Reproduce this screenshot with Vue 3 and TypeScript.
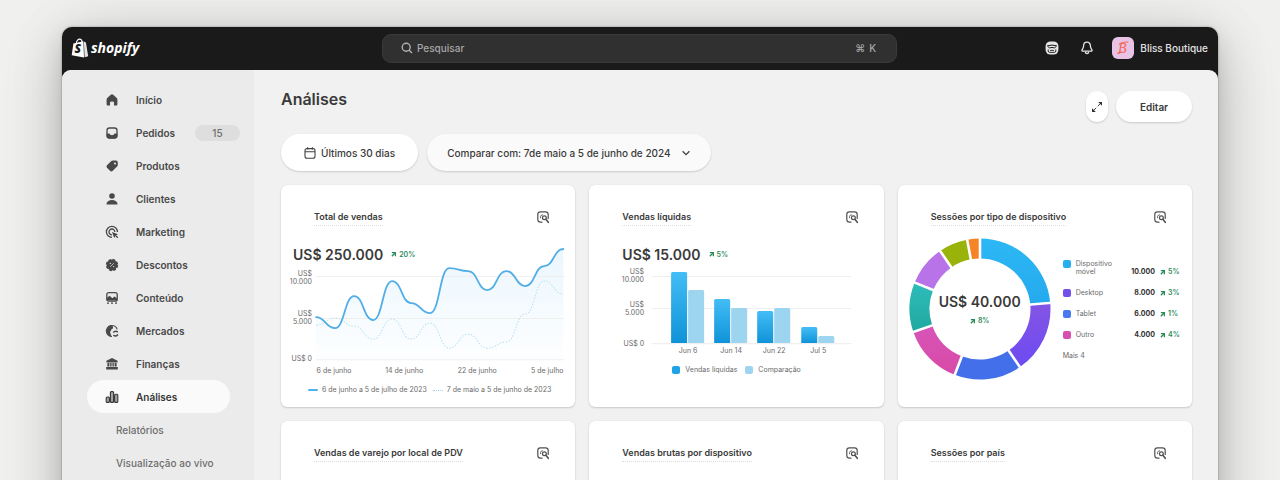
<script setup lang="ts">
interface NavItem {
  label: string
  icon: string
  badge?: string
  active?: boolean
}

interface Slice {
  name: string
  from: number
  to: number
  color: string
}

interface DeviceRow {
  label: string
  value: string
  delta: string
  color: string
}

const navItems: NavItem[] = [
  { label: 'Início', icon: 'home' },
  { label: 'Pedidos', icon: 'orders', badge: '15' },
  { label: 'Produtos', icon: 'tag' },
  { label: 'Clientes', icon: 'person' },
  { label: 'Marketing', icon: 'target' },
  { label: 'Descontos', icon: 'discount' },
  { label: 'Conteúdo', icon: 'content' },
  { label: 'Mercados', icon: 'globe' },
  { label: 'Finanças', icon: 'bank' },
  { label: 'Análises', icon: 'bars', active: true },
]

const subItems: string[] = ['Relatórios', 'Visualização ao vivo']

const CHART_LEFT = 35
const CHART_STEP = 19
const currentSales: number[] = [89, 100, 68, 92, 53, 75, 85, 40, 43, 62, 43, 58, 38, 21]
const previousSales: number[] = [97, 90, 98, 111, 91, 111, 95, 120, 106, 120, 114, 86, 53, 66]

function smoothPath(values: number[]): string {
  return values
    .map((y, i) => {
      const x = CHART_LEFT + i * CHART_STEP
      if (i === 0) return `M${x} ${y}`
      const mid = x - CHART_STEP / 2
      return `C${mid} ${values[i - 1]} ${mid} ${y} ${x} ${y}`
    })
    .join(' ')
}

const currentPath = smoothPath(currentSales)
const previousPath = smoothPath(previousSales)
const areaPath = `${currentPath} V131 H${CHART_LEFT} Z`

const barGroups = [
  { label: 'Jun 6', x: 82, sales: 44, compare: 62 },
  { label: 'Jun 14', x: 125, sales: 71, compare: 80 },
  { label: 'Jun 22', x: 168, sales: 83, compare: 80 },
  { label: 'Jul 5', x: 212, sales: 99, compare: 108 },
]
const BASELINE = 115

function barPath(x: number, top: number): string {
  return `M${x} ${BASELINE} V${top + 1.5} Q${x} ${top} ${x + 1.5} ${top} H${x + 14.5} Q${x + 16} ${top} ${x + 16} ${top + 1.5} V${BASELINE} Z`
}

const CX = 82
const CY = 81

function polar(angle: number, radius: number): { x: number; y: number } {
  const rad = ((angle - 90) * Math.PI) / 180
  return { x: CX + radius * Math.cos(rad), y: CY + radius * Math.sin(rad) }
}

function slicePath(s: Slice): string {
  const a = polar(s.from, 70.5)
  const b = polar(s.to, 70.5)
  const c = polar(s.to, 50.5)
  const d = polar(s.from, 50.5)
  return `M${a.x} ${a.y} A70.5 70.5 0 0 1 ${b.x} ${b.y} L${c.x} ${c.y} A50.5 50.5 0 0 0 ${d.x} ${d.y} Z`
}

const slices: Slice[] = [
  { name: 'a', from: 0, to: 85, color: 'url(#slice-sky)' },
  { name: 'b', from: 85, to: 145.5, color: 'url(#slice-violet)' },
  { name: 'c', from: 145.5, to: 201, color: '#4370ea' },
  { name: 'd', from: 201, to: 251, color: 'url(#slice-pink)' },
  { name: 'e', from: 251, to: 292, color: 'url(#slice-teal)' },
  { name: 'f', from: 292, to: 325.5, color: '#b873e8' },
  { name: 'g', from: 325.5, to: 349.5, color: '#9ab30a' },
  { name: 'h', from: 349.5, to: 360, color: '#f58426' },
]

const separators = slices.map((s) => ({ from: polar(s.from, 48), to: polar(s.from, 73) }))

const deviceRows: DeviceRow[] = [
  { label: 'Dispositivo móvel', value: '10.000', delta: '5%', color: 'sky' },
  { label: 'Desktop', value: '8.000', delta: '3%', color: 'violet' },
  { label: 'Tablet', value: '6.000', delta: '1%', color: 'blue' },
  { label: 'Outro', value: '4.000', delta: '4%', color: 'pink' },
]

const cards = [
  { title: 'Total de vendas', kind: 'line' },
  { title: 'Vendas líquidas', kind: 'bar' },
  { title: 'Sessões por tipo de dispositivo', kind: 'donut' },
  { title: 'Vendas de varejo por local de PDV', kind: 'empty' },
  { title: 'Vendas brutas por dispositivo', kind: 'empty' },
  { title: 'Sessões por país', kind: 'empty' },
]
</script>

<template>
  <div class="stage">
    <div class="window">
      <header class="topbar">
        <a class="brand" href="#" aria-label="shopify">
          <svg class="bag" viewBox="0 0 18 20" aria-hidden="true">
            <path d="M5.2 6 C5.4 2.6 7.4 .9 9 1.1 C10.8 1.3 11.2 3.4 11.2 5.4" fill="none" stroke="#fff" stroke-width="1.1" />
            <path d="M2.4 5.4 L12.4 3.2 L13 19.4 L.7 17.2 Z" fill="#fff" />
            <path d="M12.9 3.4 L14.9 4.6 L17.2 18.3 L13.6 19.3 Z" fill="#e4e4e4" />
            <text x="3.6" y="15.4" class="bag-letter">S</text>
          </svg>
          <span class="wordmark">shopify</span>
        </a>
        <label class="search">
          <svg class="search-icon" viewBox="0 0 12 12" aria-hidden="true">
            <circle cx="5.2" cy="5.2" r="4" /><path d="M8.2 8.2 L11 11" />
          </svg>
          <input type="search" placeholder="Pesquisar" aria-label="Pesquisar" />
          <kbd>⌘</kbd><kbd>K</kbd>
        </label>
        <div class="account">
          <button class="plain" type="button" aria-label="Assistente">
            <svg viewBox="0 0 14 14" aria-hidden="true">
              <rect x=".6" y=".4" width="12.8" height="13.2" rx="4.8" fill="#e6e6e6" />
              <path d="M2.2 4.8 Q7 3.4 11.8 4.8 M2.6 5.4 Q4.6 8 7 6.4 Q9.4 8 11.4 5.4" fill="none" stroke="#1a1a1a" stroke-width="1" />
              <path d="M3.2 8.4 V10 Q3.2 11.4 4.6 11.4 H9.4 Q10.8 11.4 10.8 10 V8.4 M5 9.8 Q7 8.4 9 9.8" fill="none" stroke="#1a1a1a" stroke-width=".9" />
            </svg>
          </button>
          <button class="plain" type="button" aria-label="Notificações">
            <svg viewBox="0 0 14 14" aria-hidden="true" fill="none" stroke="#e3e3e3" stroke-width="1.3" stroke-linejoin="round">
              <path d="M7 1.2 C4.8 1.2 3.6 2.8 3.6 4.8 C3.6 7 2.6 7.8 2 9 C1.7 9.8 2.1 10.2 2.8 10.2 H11.2 C11.9 10.2 12.3 9.8 12 9 C11.4 7.8 10.4 7 10.4 4.8 C10.4 2.8 9.2 1.2 7 1.2 Z" />
              <path d="M5.2 10.6 C5.4 12 6 12.6 7 12.6 C8 12.6 8.6 12 8.8 10.6" />
            </svg>
          </button>
          <button class="profile" type="button">
            <svg class="avatar" viewBox="0 0 22 22" aria-hidden="true">
              <rect width="22" height="22" rx="6" fill="#e9c3e6" />
              <text x="6" y="16" class="avatar-letter">B</text>
              <path d="M7 7.4 Q9 4.8 16 5 M5.4 16.4 Q8 17.2 10 14.6" fill="none" stroke="#f2654e" stroke-width="1" stroke-linecap="round" />
            </svg>
            <span>Bliss Boutique</span>
          </button>
        </div>
      </header>

      <div class="body">
        <nav class="sidebar" aria-label="Principal">
          <a v-for="item in navItems" :key="item.label" href="#" class="nav-item" :class="{ active: item.active }">
            <svg class="nav-icon" viewBox="0 0 14 14" aria-hidden="true">
              <path v-if="item.icon === 'home'" d="M7 1.2 Q7.6 1.2 8.2 1.7 L11.8 5 Q12.4 5.6 12.4 6.4 V11.2 Q12.4 12.4 11.2 12.4 H9 V9.6 Q9 8.4 7 8.4 Q5 8.4 5 9.6 V12.4 H2.8 Q1.6 12.4 1.6 11.2 V6.4 Q1.6 5.6 2.2 5 L5.8 1.7 Q6.4 1.2 7 1.2 Z" />
              <template v-else-if="item.icon === 'orders'">
                <rect x="2" y="2" width="10" height="10" rx="2.4" fill="none" stroke="currentColor" stroke-width="1.3" />
                <path d="M1.6 7.4 H4.4 Q5 9.2 7 9.2 Q9 9.2 9.6 7.4 H12.4 V10 Q12.4 12.6 9.8 12.6 H4.2 Q1.6 12.6 1.6 10 Z" />
              </template>
              <path v-else-if="item.icon === 'tag'" fill-rule="evenodd" d="M8 1.6 H11 Q12.8 1.6 12.8 3.4 V5.8 Q12.8 6.8 12.1 7.5 L7.8 11.8 Q6.4 13.2 5 11.8 L2 8.8 Q.8 7.4 2 6.2 L5.8 2.4 Q6.8 1.6 8 1.6 Z M10 3.4 A1 1 0 1 0 10 5.4 A1 1 0 1 0 10 3.4 Z" />
              <template v-else-if="item.icon === 'person'">
                <circle cx="7" cy="4" r="2.8" />
                <path d="M1.8 12.4 Q1.4 12.4 1.5 11.6 Q2.6 8 7 8 Q11.4 8 12.5 11.6 Q12.6 12.4 12.2 12.4 Z" />
              </template>
              <g v-else-if="item.icon === 'target'" fill="none" stroke="currentColor" stroke-width="1.3">
                <path d="M7 12.4 A5.5 5.5 0 1 1 12.4 7" /><path d="M7 9.8 A2.9 2.9 0 1 1 9.8 7" />
                <path d="M7 7 L13 9.2 L10.6 10.4 L9.2 13 Z" fill="currentColor" stroke="none" />
                <path d="M10.4 10.4 L12.8 12.8" />
              </g>
              <template v-else-if="item.icon === 'discount'">
                <circle cx="7" cy="7" r="5.4" />
                <circle cx="7" cy="7" r="5.4" fill="none" stroke="currentColor" stroke-width="1.6" stroke-dasharray="2.7 1.54" />
                <path d="M5.2 8.8 L8.8 5.2" stroke="#d0d0d0" stroke-width=".8" />
                <circle cx="5.4" cy="5.4" r=".7" fill="#d0d0d0" /><circle cx="8.6" cy="8.6" r=".7" fill="#d0d0d0" />
              </template>
              <template v-else-if="item.icon === 'content'">
                <rect x="1.8" y="1.6" width="10.4" height="8.6" rx="2" fill="none" stroke="currentColor" stroke-width="1.3" />
                <path d="M1.8 7 L4.6 4.8 L7.4 7.2 L9.4 5.6 L12.2 7.4 V9.4 H1.8 Z" />
                <path d="M2 12.2 H4 M6 12.2 H8 M10 12.2 H12" stroke="currentColor" stroke-width="1.2" />
              </template>
              <template v-else-if="item.icon === 'globe'">
                <path d="M12.2 5.4 A5.5 5.5 0 1 0 7 12.5" fill="none" stroke="currentColor" stroke-width="1.2" />
                <path d="M6.8 1.6 Q9 3 7.4 5 Q5.6 5 6 7 Q4.4 7 5.4 9.2 L6.6 12.4 Q1.6 11.6 1.4 7 Q1.8 2 6.8 1.6 Z" />
                <path d="M8.2 8.6 Q10.4 6.2 12.8 8.2 M13 10.4 Q10.8 13 8.4 11.2" fill="none" stroke="currentColor" stroke-width="1.5" />
              </template>
              <path v-else-if="item.icon === 'bank'" d="M7 .9 L12.6 3.8 V5.4 H1.4 V3.8 Z M2.4 6 H4.4 V9.4 H2.4 Z M5.2 6 H6.6 V9.4 H5.2 Z M7.4 6 H8.8 V9.4 H7.4 Z M9.6 6 H11.6 V9.4 H9.6 Z M1.2 10 H12.8 V12.4 H1.2 Z" />
              <g v-else fill="#a3a3a3" stroke="currentColor" stroke-width="1.1">
                <rect x="1.2" y="7" width="3.2" height="5.4" rx="1" />
                <rect x="5.4" y="1.6" width="3.2" height="10.8" rx="1" />
                <rect x="9.6" y="4.2" width="3.2" height="8.2" rx="1" />
              </g>
            </svg>
            <span class="nav-label">{{ item.label }}</span>
            <span v-if="item.badge" class="badge">{{ item.badge }}</span>
          </a>
          <a v-for="label in subItems" :key="label" href="#" class="nav-item sub">{{ label }}</a>
        </nav>

        <main class="main">
          <div class="page-head">
            <h1>Análises</h1>
            <div class="actions">
              <button class="pill expand" type="button" aria-label="Expandir">
                <svg viewBox="0 0 12 12" aria-hidden="true">
                  <path d="M2.4 9.6 L9.6 2.4" stroke="#444" stroke-width="1" stroke-dasharray="4 2.2" />
                  <path d="M7.2 1 H11 V4.8 Z M1 7.2 V11 H4.8 Z" fill="#303030" />
                </svg>
              </button>
              <button class="pill edit" type="button">Editar</button>
            </div>
          </div>

          <div class="filters">
            <button class="pill" type="button">
              <svg class="calendar" viewBox="0 0 12 12" aria-hidden="true">
                <rect x="1" y="1.6" width="10" height="9.6" rx="2" /><path d="M1 4.8 H11 M3.6 .2 V2.4 M8.4 .2 V2.4" />
              </svg>
              Últimos 30 dias
            </button>
            <button class="pill compare" type="button">
              Comparar com: 7de maio a 5 de junho de 2024
              <svg class="chevron" viewBox="0 0 10 10" aria-hidden="true"><path d="M1.6 3.2 L5 6.6 L8.4 3.2" /></svg>
            </button>
          </div>

          <div class="cards">
            <section v-for="card in cards" :key="card.title" class="card">
              <div class="card-head">
                <h2>{{ card.title }}</h2>
                <button class="explore" type="button" :aria-label="'Explorar ' + card.title">
                  <svg viewBox="0 0 12 12" aria-hidden="true" fill="none" stroke="#505050" stroke-width="1.2" stroke-linecap="round">
                    <path d="M5 11.2 H3.4 Q.8 11.2 .8 8.6 V3.2 Q.8 .8 3.4 .8 H8.6 Q11.2 .8 11.2 3.4 V7.4" />
                    <path d="M3.6 6.8 V5.4 Q3.8 3.8 5.6 3.8" stroke-width=".9" />
                    <circle cx="7.4" cy="6.8" r="1.9" /><path d="M8.9 8.3 L11.3 11.3" stroke-width="1.6" />
                  </svg>
                </button>
              </div>

              <template v-if="card.kind === 'line'">
                <div class="plot">
                  <svg class="chart" viewBox="0 0 294 150" role="img" aria-label="Total de vendas por dia">
                    <defs>
                      <linearGradient id="area-fill" x1="0" y1="0" x2="0" y2="1">
                        <stop offset="0" stop-color="#36a9ee" stop-opacity=".1" />
                        <stop offset="1" stop-color="#36a9ee" stop-opacity=".01" />
                      </linearGradient>
                    </defs>
                    <path :d="areaPath" fill="url(#area-fill)" />
                    <path class="grid-line" d="M35 48.5 H283 M35 90.5 H283 M35 131.5 H283" />
                    <path :d="previousPath" class="line-previous" />
                    <path :d="currentPath" class="line-current" />
                    <g class="axis" text-anchor="end">
                      <text x="31" y="48">US$</text><text x="31" y="56">10.000</text>
                      <text x="31" y="88">US$</text><text x="31" y="96">5.000</text>
                      <text x="31" y="133">US$ 0</text>
                    </g>
                    <g class="axis" text-anchor="middle">
                      <text x="53" y="145">6 de junho</text><text x="123" y="145">14 de junho</text>
                      <text x="196" y="145">22 de junho</text><text x="266" y="145">5 de julho</text>
                    </g>
                  </svg>
                  <div class="total">
                    <strong>US$ 250.000</strong>
                    <span class="delta"><svg viewBox="0 0 6 6" aria-hidden="true"><path d="M1 .8 H5.2 V5" /><path d="M5 1 L1 5" /></svg>20%</span>
                  </div>
                </div>
                <div class="legend line-legend">
                  <span class="key"><i class="dash"></i>6 de junho a 5 de julho de 2023</span>
                  <span class="key"><i class="dots"></i>7 de maio a 5 de junho de 2023</span>
                </div>
              </template>

              <template v-else-if="card.kind === 'bar'">
                <div class="plot">
                  <svg class="chart" viewBox="0 0 294 130" role="img" aria-label="Vendas líquidas por período">
                    <defs>
                      <linearGradient id="bar-fill" x1="0" y1="0" x2="0" y2="1">
                        <stop offset="0" stop-color="#43bdf5" /><stop offset="1" stop-color="#0f93d8" />
                      </linearGradient>
                    </defs>
                    <path class="grid-line" d="M63 48.5 H262 M63 80.5 H262 M63 115.5 H262" />
                    <g v-for="g in barGroups" :key="g.label">
                      <path :d="barPath(g.x, g.sales)" fill="url(#bar-fill)" />
                      <path :d="barPath(g.x + 17, g.compare)" fill="#9dd4ef" />
                      <text class="axis" text-anchor="middle" :x="g.x + 17" y="125">{{ g.label }}</text>
                    </g>
                    <g class="axis" text-anchor="end">
                      <text x="55" y="46">US$</text><text x="55" y="54">10.000</text>
                      <text x="55" y="79">US$</text><text x="55" y="87">5.000</text>
                      <text x="55" y="118">US$ 0</text>
                    </g>
                  </svg>
                  <div class="total inset">
                    <strong>US$ 15.000</strong>
                    <span class="delta"><svg viewBox="0 0 6 6" aria-hidden="true"><path d="M1 .8 H5.2 V5" /><path d="M5 1 L1 5" /></svg>5%</span>
                  </div>
                </div>
                <div class="legend bar-legend">
                  <span class="key"><i class="swatch azure"></i>Vendas líquidas</span>
                  <span class="key"><i class="swatch pale"></i>Comparação</span>
                </div>
              </template>

              <div v-else-if="card.kind === 'donut'" class="devices">
                <div class="ring">
                  <svg viewBox="0 0 154 153" role="img" aria-label="Sessões por tipo de dispositivo">
                    <defs>
                      <linearGradient id="slice-sky" x1="0" y1="0" x2="0" y2="1">
                        <stop offset="0" stop-color="#2cb8f4" /><stop offset="1" stop-color="#25a9ee" />
                      </linearGradient>
                      <linearGradient id="slice-violet" x1="0" y1="0" x2="0" y2="1">
                        <stop offset="0" stop-color="#8455e4" /><stop offset="1" stop-color="#6c4af2" />
                      </linearGradient>
                      <linearGradient id="slice-pink" x1="0" y1="0" x2="0" y2="1">
                        <stop offset="0" stop-color="#d755b8" /><stop offset="1" stop-color="#d849a6" />
                      </linearGradient>
                      <linearGradient id="slice-teal" x1="0" y1="0" x2="0" y2="1">
                        <stop offset="0" stop-color="#2fbdbb" /><stop offset="1" stop-color="#1fa89f" />
                      </linearGradient>
                    </defs>
                    <path v-for="s in slices" :key="s.name" :d="slicePath(s)" :fill="s.color" />
                    <line v-for="(l, i) in separators" :key="i" :x1="l.from.x" :y1="l.from.y" :x2="l.to.x" :y2="l.to.y" stroke="#fff" stroke-width="2.6" />
                  </svg>
                  <div class="ring-total">
                    <strong>US$ 40.000</strong>
                    <span class="delta"><svg viewBox="0 0 6 6" aria-hidden="true"><path d="M1 .8 H5.2 V5" /><path d="M5 1 L1 5" /></svg>8%</span>
                  </div>
                </div>
                <ul class="device-list">
                  <li v-for="row in deviceRows" :key="row.label">
                    <i class="swatch" :class="row.color"></i>
                    <span class="device">{{ row.label }}</span>
                    <b>{{ row.value }}</b>
                    <span class="delta"><svg viewBox="0 0 6 6" aria-hidden="true"><path d="M1 .8 H5.2 V5" /><path d="M5 1 L1 5" /></svg>{{ row.delta }}</span>
                  </li>
                  <li>Mais 4</li>
                </ul>
              </div>
            </section>
          </div>
        </main>
      </div>
    </div>
  </div>
</template>

<style>
body {
  margin: 0;
  background: #f0f0ee;
}
</style>

<style scoped>
* {
  box-sizing: border-box;
}

.stage {
  height: 100vh;
  overflow: hidden;
  padding: 27px 62px 0;
  background: #f0f0ee;
  color: #3a3a3a;
  font-family: Inter, "Liberation Sans", sans-serif;
  font-size: 10px;
  font-weight: 500;
}

button,
input,
kbd {
  font: inherit;
  color: inherit;
}

button {
  border: 0;
  padding: 0;
  background: none;
  cursor: pointer;
}

a {
  color: inherit;
  text-decoration: none;
}

svg {
  display: block;
}

.window {
  min-height: 100%;
  border-radius: 10px 10px 0 0;
  background: #1a1a1a;
  box-shadow: 0 20px 60px rgba(0, 0, 0, 0.2), 0 0 60px rgba(0, 0, 0, 0.08), 0 8px 20px rgba(0, 0, 0, 0.1), 0 0 2px rgba(0, 0, 0, 0.4);
}

.topbar {
  display: grid;
  grid-template-columns: 1fr minmax(0, 515px) 1fr;
  align-items: center;
  height: 43px;
  padding: 0 10px 1px 9px;
  color: #e3e3e3;
}

.brand {
  display: flex;
  align-items: center;
  gap: 2px;
}

.bag {
  width: 18px;
  height: 20px;
}

.bag-letter {
  font: italic 800 12px "Open Sans", sans-serif;
  fill: #1a1a1a;
}

.wordmark {
  color: #fff;
  font: italic 700 14px/20px "Open Sans", sans-serif;
}

.search {
  display: flex;
  align-items: center;
  gap: 4px;
  height: 29px;
  padding: 0 20px 0 18px;
  border: 1px solid #3a3a3a;
  border-radius: 9px;
  background: #303030;
  color: #a8a8a8;
}

.search-icon {
  width: 12px;
  height: 12px;
  fill: none;
  stroke: #b0b0b0;
  stroke-width: 1.4;
}

.search input {
  flex: 1;
  min-width: 0;
  padding: 0;
  border: 0;
  outline: 0;
  background: none;
}

.search input::placeholder {
  color: #a8a8a8;
  opacity: 1;
}

.account {
  display: flex;
  align-items: center;
  justify-content: flex-end;
}

.plain {
  margin-right: 21px;
}

.plain + .plain {
  margin-right: 18px;
}

.plain svg {
  width: 14px;
  height: 14px;
}

.profile {
  display: flex;
  align-items: center;
  gap: 6px;
}

.avatar {
  width: 22px;
  height: 22px;
}

.avatar-letter {
  font: italic 400 14px "Liberation Serif", serif;
  fill: #f2654e;
}

.body {
  display: flex;
  min-height: calc(100vh - 70px);
  border-radius: 9px 9px 0 0;
  background: #f1f1f1;
  overflow: hidden;
}

.sidebar {
  flex: none;
  width: 192px;
  padding: 13px 14px 0 25px;
  background: #ebebeb;
}

.nav-item {
  display: flex;
  align-items: center;
  height: 33px;
  padding-left: 18px;
  border-radius: 17px;
  color: #484848;
  font-weight: 600;
}

.nav-item.active {
  margin-right: 10px;
  background: #fafafa;
  color: #363636;
}

.nav-item.sub {
  padding-left: 29px;
  color: #6e6e6e;
  font-weight: 500;
}

.nav-icon {
  width: 14px;
  height: 14px;
  margin-right: 17px;
  fill: currentColor;
}

.badge {
  width: 45px;
  margin-left: auto;
  border-radius: 8px;
  background: #dedede;
  color: #707070;
  font-weight: 500;
  line-height: 16px;
  text-align: center;
}

.main {
  flex: 1;
  min-width: 0;
  padding: 21px 26px 0 27px;
}

.page-head {
  display: flex;
  align-items: flex-start;
  justify-content: space-between;
}

h1 {
  margin: 0;
  font-size: 16px;
  font-weight: 600;
  line-height: 17px;
}

.actions {
  display: flex;
  gap: 8px;
}

.pill {
  display: flex;
  align-items: center;
  justify-content: center;
  height: 37px;
  padding: 0 23px;
  border-radius: 19px;
  background: #fff;
  box-shadow: 0 1px 2px rgba(0, 0, 0, 0.16);
}

.actions .pill {
  height: 31px;
}

.pill.expand {
  width: 22px;
  padding: 0;
}

.expand svg {
  width: 12px;
  height: 12px;
}

.pill.edit {
  width: 76px;
  font-weight: 600;
}

.filters {
  display: flex;
  gap: 9px;
  margin: 12px 0 14px;
}

.pill.compare {
  padding: 0 20px;
  background: #fafafa;
}

.calendar {
  width: 12px;
  height: 12px;
  margin-right: 5px;
  fill: none;
  stroke: #404040;
  stroke-width: 1.1;
}

.chevron {
  width: 10px;
  height: 10px;
  margin-left: 10px;
  fill: none;
  stroke: #404040;
  stroke-width: 1.3;
}

.cards {
  display: grid;
  grid-template-columns: repeat(3, minmax(0, 1fr));
  gap: 14px;
}

.card {
  min-height: 222px;
  padding-top: 25px;
  border-radius: 6px;
  background: #fff;
  box-shadow: 0 1px 2px rgba(0, 0, 0, 0.16), 0 0 1px rgba(0, 0, 0, 0.12);
}

.card-head {
  display: flex;
  align-items: flex-start;
  justify-content: space-between;
  padding: 0 26px 2px 33px;
}

h2 {
  margin: 0;
  padding-bottom: 1px;
  border-bottom: 1px dotted #dcdcdc;
  font-size: 9px;
  font-weight: 600;
  line-height: 14px;
}

.explore svg {
  width: 12px;
  height: 14px;
}

.plot {
  display: grid;
}

.plot > * {
  grid-area: 1 / 1;
}

.chart {
  width: 100%;
}

.total {
  display: flex;
  align-items: center;
  align-self: start;
  gap: 8px;
  padding: 18px 0 0 12px;
}

.total.inset {
  padding-left: 33px;
}

strong {
  font-size: 14px;
  font-weight: 600;
  line-height: 17px;
}

.delta {
  display: inline-flex;
  align-items: center;
  gap: 3px;
  color: #2b8a5c;
  font-size: 7px;
  font-weight: 600;
  line-height: 8px;
}

.delta svg {
  width: 5px;
  height: 5px;
  fill: none;
  stroke: currentColor;
  stroke-width: 1.6;
}

.axis {
  font-size: 7px;
  font-weight: 400;
  fill: #6a6a6a;
}

.grid-line {
  stroke: #efefef;
  fill: none;
}

.line-current {
  fill: none;
  stroke: #52aee6;
  stroke-width: 1.8;
  stroke-linecap: round;
}

.line-previous {
  fill: none;
  stroke: #b8e0f2;
  stroke-width: 1;
  stroke-dasharray: 1.5 1.5;
}

.legend {
  display: flex;
  color: #6a6a6a;
  font-size: 7px;
  font-weight: 400;
  line-height: 8px;
}

.line-legend {
  gap: 6px;
  padding: 8px 0 0 27px;
}

.bar-legend {
  gap: 8px;
  padding: 8px 0 0 83px;
}

.key {
  display: flex;
  align-items: center;
  gap: 4px;
  white-space: nowrap;
}

.bar-legend .key {
  gap: 5px;
}

.dash {
  width: 10px;
  height: 2px;
  border-radius: 1px;
  background: #4fb2ee;
}

.dots {
  width: 10px;
  border-top: 1px dotted #9fd3ef;
}

.swatch {
  width: 8px;
  height: 8px;
  border-radius: 2px;
}

.azure { background: #1fa3e6; }
.pale { background: #9dd4ef; }
.sky { background: #27aeee; }
.violet { background: #7350ea; }
.blue { background: #4a78ee; }
.pink { background: #d94fb0; }

.devices {
  display: flex;
}

.ring {
  display: grid;
  flex: none;
  width: 154px;
}

.ring > * {
  grid-area: 1 / 1;
}

.ring svg {
  width: 100%;
}

.ring-total {
  display: flex;
  flex-direction: column;
  align-items: center;
  gap: 7px;
  padding: 65px 0 0 10px;
}

.ring-total .delta svg {
  width: 5px;
}

.device-list {
  display: flex;
  flex: 1;
  flex-direction: column;
  gap: 13px;
  margin: 0;
  padding: 32px 12px 0 11px;
  list-style: none;
  color: #6a6a6a;
  font-size: 7px;
  font-weight: 400;
  line-height: 8px;
}

.device-list li {
  display: flex;
  gap: 5px;
}

.device {
  flex: 1;
  width: 42px;
}

.device-list b {
  align-self: flex-end;
  color: #303030;
  font-weight: 700;
}

.device-list .delta {
  align-self: flex-end;
  width: 20px;
}
</style>
